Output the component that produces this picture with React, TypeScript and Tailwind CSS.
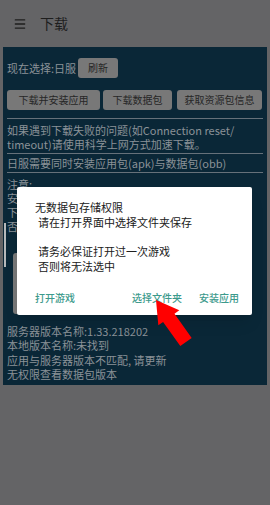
import { Menu } from 'lucide-react'

const font = { fontFamily: '"Noto Sans CJK SC", "Noto Sans", sans-serif' }

function GrayButton({ label, className = '' }: { label: string; className?: string }) {
  return (
    <div className={`h-[20px] rounded-[3px] bg-[#787878] text-[10px] text-[#262626] flex items-center justify-center ${className}`}>
      {label}
    </div>
  )
}

export default function App() {
  return (
    <div className="relative w-[270px] h-[505px] overflow-hidden bg-[#646466]" style={font}>
      {/* app bar (dimmed) */}
      <div className="h-[47px] flex items-center pl-[13px] gap-[13px] text-[#1e1e1e]">
        <Menu size={14} strokeWidth={2.25} />
        <span className="text-[14px]">下载</span>
      </div>

      {/* main panel */}
      <div className="mx-[3px] h-[338px] bg-[#0a2737] px-[4px] pt-[11px] text-[11px] leading-[14px] text-[#8b9298]">
        <div className="flex items-center h-[20px]">
          <span>现在选择:日服</span>
          <GrayButton label="刷新" className="ml-[2px] w-[40px]" />
        </div>

        <div className="mt-[12px] flex gap-[3px] pr-[1px]">
          <GrayButton label="下载并安装应用" className="w-[93px]" />
          <GrayButton label="下载数据包" className="w-[69px]" />
          <GrayButton label="获取资源包信息" className="ml-[2px] flex-1" />
        </div>

        <div className="mt-[8px] h-px bg-[#66717a]" />
        <p className="mt-[4px]">如果遇到下载失败的问题(如Connection reset/<br />timeout)请使用科学上网方式加速下载。</p>
        <div className="mt-[2px] h-px bg-[#66717a]" />
        <p className="mt-[2px]">日服需要同时安装应用包(apk)与数据包(obb)</p>
        <div className="mt-[2px] h-px bg-[#66717a]" />
        <p className="mt-[4px]">注意:</p>
        <p>安卓11及以上系统需要授予数据包文件夹权限</p>
        <p>下载完成后请先打开一次游戏再安装数据包文</p>
        <p>否则可能无法正常读取</p>
        <div className="mt-[20px] ml-[6px] h-[61px] w-[230px] rounded-[3px] bg-[#787878]" />
        <p className="mt-[10px]">服务器版本名称:1.33.218202</p>
        <p>本地版本名称:未找到</p>
        <p className="mt-[1px]">应用与服务器版本不匹配, 请更新</p>
        <p>无权限查看数据包版本</p>
      </div>

      {/* scrollbar behind dialog */}
      <div className="absolute left-[4px] top-[223px] w-[2px] h-[44px] bg-[#b5b8ba]" />

      {/* dialog */}
      <div className="absolute left-[17px] top-[187px] w-[235px] h-[128px] rounded-[2px] bg-white shadow-lg pl-[18px] pt-[13px] text-[11px] leading-[15px] text-[#202020]">
        <p>无数据包存储权限</p>
        <p className="pl-[3px]">请在打开界面中选择文件夹保存</p>
        <p className="pl-[3px] mt-[14px]">请务必保证打开过一次游戏</p>
        <p className="pl-[3px]">否则将无法选中</p>
        <div className="mt-[16px] flex text-[10px] font-medium text-[#3c9a8c]">
          <span>打开游戏</span>
          <span className="ml-[57px]">选择文件夹</span>
          <span className="ml-[17px]">安装应用</span>
        </div>
      </div>

      {/* red pointer arrow */}
      <svg className="absolute left-0 top-0" width="270" height="505" viewBox="0 0 270 505">
        <polygon
          points="156,300 179.3,310.3 174.5,313.7 191.7,337.9 180.3,346.1 163.1,321.9 158.3,325.3"
          fill="#ff0000"
        />
      </svg>
    </div>
  )
}
